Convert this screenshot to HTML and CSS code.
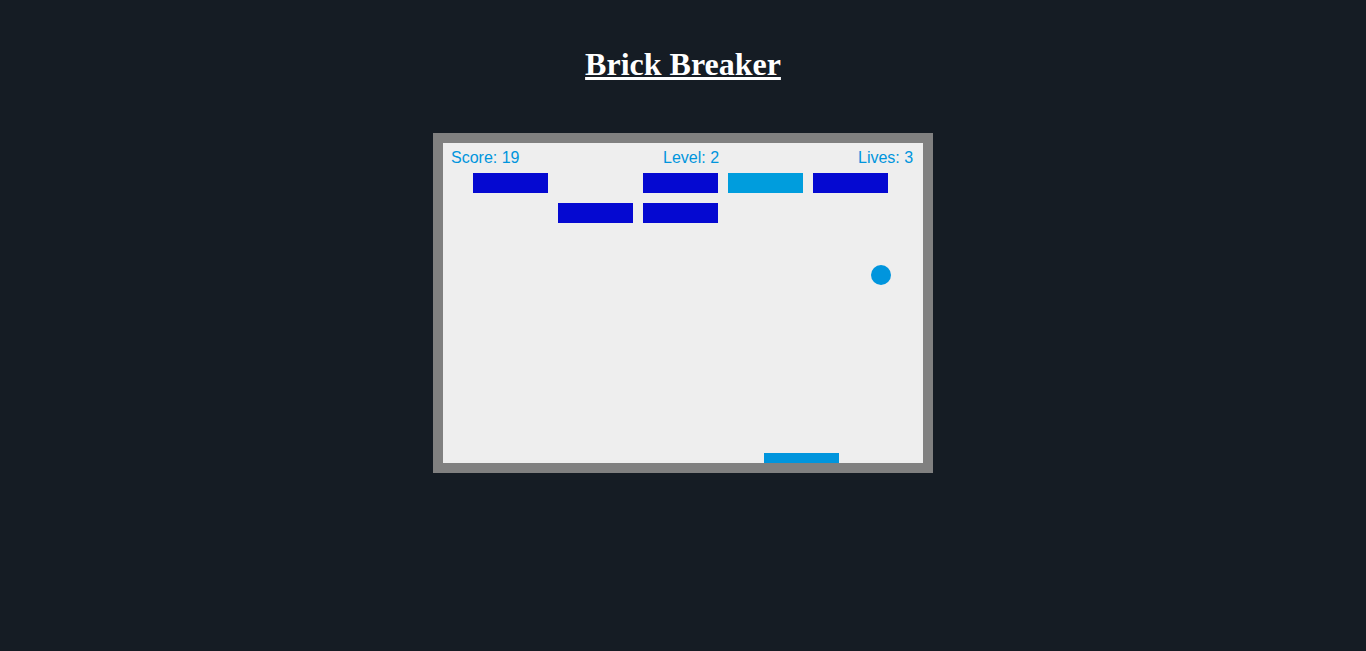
FILE: index.html
```html
<!DOCTYPE html>
<html>
<head>
<meta charset="utf-8">
<link rel="stylesheet" href="styles.css">
</head>
<body>
<main class="page">
  <h1 class="title">Brick Breaker</h1>
  <div class="board">
    <svg class="game" width="480" height="320" viewBox="0 0 480 320">
      <rect x="0" y="0" width="480" height="320" fill="#eeeeee"/>
      <text class="hud" x="8" y="20">Score: 19</text>
      <text class="hud" x="220" y="20">Level: 2</text>
      <text class="hud" x="415" y="20">Lives: 3</text>
      <rect x="30" y="30" width="75" height="20" fill="#0509d1"/>
      <rect x="200" y="30" width="75" height="20" fill="#0509d1"/>
      <rect x="285" y="30" width="75" height="20" fill="#009ddd"/>
      <rect x="370" y="30" width="75" height="20" fill="#0509d1"/>
      <rect x="115" y="60" width="75" height="20" fill="#0509d1"/>
      <rect x="200" y="60" width="75" height="20" fill="#0509d1"/>
      <circle cx="438" cy="132" r="10" fill="#0095dd"/>
      <rect x="321" y="310" width="75" height="10" fill="#0095dd"/>
    </svg>
  </div>
</main>
</body>
</html>
```
FILE: styles.css
```css
html, body {
  margin: 0;
  padding: 0;
  background: #151c24;
  height: 100%;
}
.page {
  display: flex;
  flex-direction: column;
  align-items: center;
  padding-top: 40px;
}
.title {
  font-family: "Liberation Serif", "Times New Roman", serif;
  font-size: 32px;
  font-weight: bold;
  color: #ffffff;
  text-decoration: underline;
  margin: 0 0 45px 0;
  line-height: 48px;
}
.board {
  border: 10px solid #808080;
  width: 480px;
  height: 320px;
  display: flex;
}
.game {
  display: block;
}
.hud {
  font-family: "Liberation Sans", Arial, sans-serif;
  font-size: 16px;
  fill: #0095dd;
}
```
